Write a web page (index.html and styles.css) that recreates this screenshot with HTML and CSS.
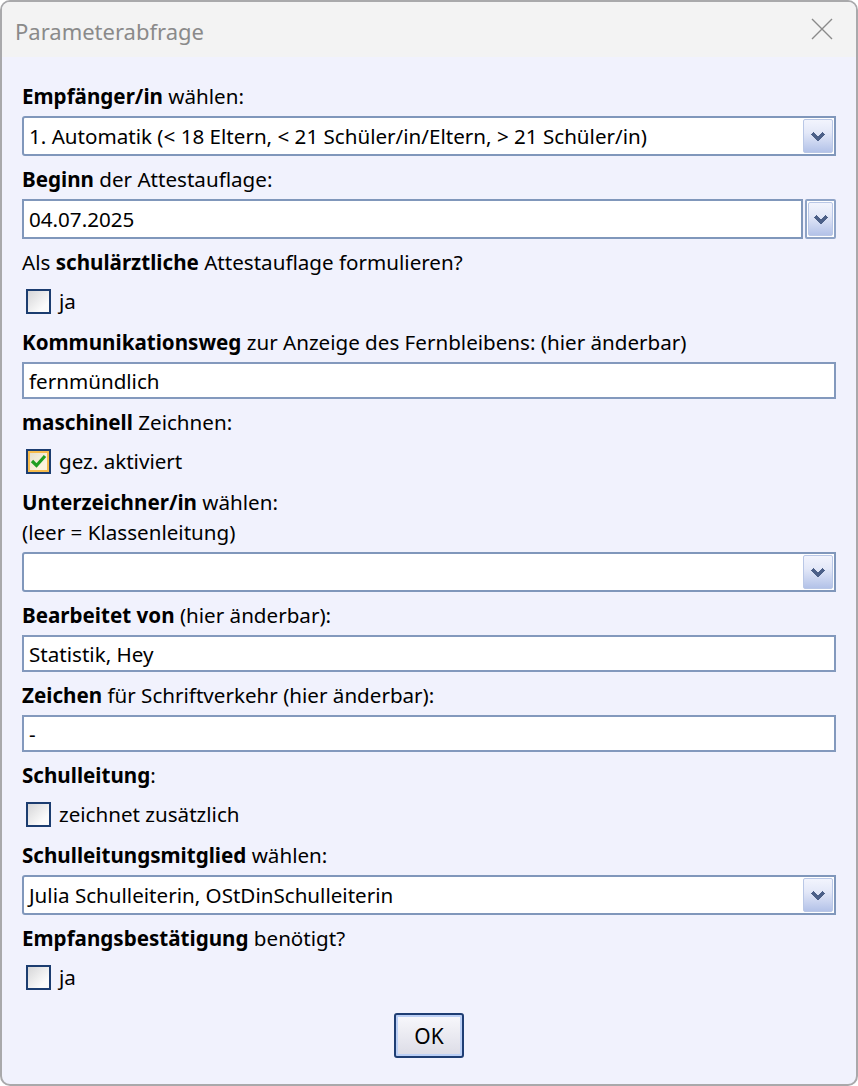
FILE: index.html
```html
<!DOCTYPE html>
<html lang="de">
<head>
<meta charset="utf-8">
<title>Parameterabfrage</title>
<link rel="stylesheet" href="styles.css">
</head>
<body>
<div class="window">
  <div class="titlebar">
    <span class="title">Parameterabfrage</span>
    <svg class="close" width="22" height="22" viewBox="0 0 22 22"><path d="M1 1 L21 21 M21 1 L1 21" stroke="#8a8a8a" stroke-width="1.4" fill="none"/></svg>
  </div>
  <div class="content">
    <div class="label first"><b>Empfänger/in</b> wählen:</div>
    <div class="combo field">
      <span class="value">1. Automatik (&lt; 18 Eltern, &lt; 21 Schüler/in/Eltern, &gt; 21 Schüler/in)</span>
      <span class="dd"><svg width="14" height="9" viewBox="0 0 14 9" shape-rendering="crispEdges"><polyline points="1.5,1.5 7,7 12.5,1.5" fill="none" stroke="#4c6088" stroke-width="3.2"/></svg></span>
    </div>

    <div class="label"><b>Beginn</b> der Attestauflage:</div>
    <div class="datecombo field">
      <span class="datefield">04.07.2025</span>
      <span class="datebtn"><span class="dd"><svg width="14" height="9" viewBox="0 0 14 9" shape-rendering="crispEdges"><polyline points="1.5,1.5 7,7 12.5,1.5" fill="none" stroke="#4c6088" stroke-width="3.2"/></svg></span></span>
    </div>

    <div class="label">Als <b>schulärztliche</b> Attestauflage formulieren?</div>
    <div class="check"><span class="box"></span><span>ja</span></div>

    <div class="label after-check"><b>Kommunikationsweg</b> zur Anzeige des Fernbleibens: (hier änderbar)</div>
    <div class="input field">fernmündlich</div>

    <div class="label"><b>maschinell</b> Zeichnen:</div>
    <div class="check"><span class="box checked"><svg width="17" height="15" viewBox="0 0 17 15"><polyline points="2,7 6.5,11.5 15,2" fill="none" stroke="#1e9e22" stroke-width="3.2"/></svg></span><span>gez. aktiviert</span></div>

    <div class="label after-check"><b>Unterzeichner/in</b> wählen:<br>(leer = Klassenleitung)</div>
    <div class="combo field">
      <span class="value"></span>
      <span class="dd"><svg width="14" height="9" viewBox="0 0 14 9" shape-rendering="crispEdges"><polyline points="1.5,1.5 7,7 12.5,1.5" fill="none" stroke="#4c6088" stroke-width="3.2"/></svg></span>
    </div>

    <div class="label"><b>Bearbeitet von</b> (hier änderbar):</div>
    <div class="input field">Statistik, Hey</div>

    <div class="label"><b>Zeichen</b> für Schriftverkehr (hier änderbar):</div>
    <div class="input field">-</div>

    <div class="label"><b>Schulleitung</b>:</div>
    <div class="check"><span class="box"></span><span>zeichnet zusätzlich</span></div>

    <div class="label after-check"><b>Schulleitungsmitglied</b> wählen:</div>
    <div class="combo field">
      <span class="value">Julia Schulleiterin, OStDinSchulleiterin</span>
      <span class="dd"><svg width="14" height="9" viewBox="0 0 14 9" shape-rendering="crispEdges"><polyline points="1.5,1.5 7,7 12.5,1.5" fill="none" stroke="#4c6088" stroke-width="3.2"/></svg></span>
    </div>

    <div class="label"><b>Empfangsbestätigung</b> benötigt?</div>
    <div class="check"><span class="box"></span><span>ja</span></div>

    <div class="buttons"><button class="ok">OK</button></div>
  </div>
</div>
</body>
</html>
```

FILE: styles.css
```css
html, body {
  margin: 0;
  padding: 0;
  background: #ffffff;
}

body {
  font-family: "Noto Sans", "Open Sans", sans-serif;
  font-size: 20.6px;
  color: #000;
}

.window {
  width: 858px;
  height: 1086px;
  box-sizing: border-box;
  border: 2px solid #a9a9ab;
  border-radius: 10px;
  overflow: hidden;
  background: #f1f2fd;
  display: flex;
  flex-direction: column;
}

.titlebar {
  height: 55px;
  flex: none;
  background: #f3f3f3;
  display: flex;
  align-items: center;
  justify-content: space-between;
  padding: 0 23px 0 13px;
}

.title {
  font-size: 22px;
  color: #8a8a8a;
  padding-top: 2px;
}

.close {
  margin-top: -2px;
}

.content {
  display: flex;
  flex-direction: column;
  padding: 24px 20px 0 20px;
}

.label {
  line-height: 30px;
  margin-top: 8px;
  white-space: nowrap;
}

.label.first {
  margin-top: 0;
}

.label.after-check {
  margin-top: 11px;
}

b {
  font-weight: 700;
}

.field {
  margin-top: 5px;
}

.combo {
  height: 40px;
  box-sizing: border-box;
  border: 2px solid #8097bb;
  border-top-left-radius: 3px;
  border-bottom-left-radius: 3px;
  background: #fff;
  display: flex;
  align-items: stretch;
  padding: 1px;
}

.combo .value {
  flex: 1;
  display: flex;
  align-items: center;
  padding-left: 4px;
  white-space: nowrap;
}

.dd {
  width: 30px;
  box-sizing: border-box;
  border: 1px solid #b9c7e6;
  border-radius: 2px;
  background: linear-gradient(#f2f4fd, #e3e8f8 40%, #b3c2e8);
  display: flex;
  align-items: center;
  justify-content: center;
}

.datecombo {
  height: 40px;
  display: flex;
  gap: 2px;
}

.datefield {
  flex: 1;
  box-sizing: border-box;
  border: 2px solid #8097bb;
  background: #fff;
  display: flex;
  align-items: center;
  padding-left: 5px;
}

.datebtn {
  width: 31px;
  box-sizing: border-box;
  border: 2px solid #8ea3c6;
  border-radius: 2px;
  background: #fff;
  padding: 1px;
  display: flex;
}

.datebtn .dd {
  flex: 1;
}

.input {
  height: 37px;
  box-sizing: border-box;
  border: 2px solid #8399bd;
  background: #fff;
  display: flex;
  align-items: center;
  padding-left: 5px;
}

.check {
  margin-top: 9px;
  height: 30px;
  display: flex;
  align-items: center;
  gap: 8px;
  padding-left: 4px;
}

.box {
  width: 25px;
  height: 25px;
  box-sizing: border-box;
  border: 2px solid #1c3d70;
  background: linear-gradient(135deg, #d6d6d8, #fbfbfb 75%);
  display: flex;
  align-items: center;
  justify-content: center;
}

.box.checked {
  border-color: #1c3d70;
  box-shadow: inset 0 0 0 2px #f6bb4c;
  background: linear-gradient(135deg, #e2dccb, #fcf4de 70%);
}

.buttons {
  display: flex;
  justify-content: center;
  margin-top: 21px;
}

.ok {
  width: 70px;
  height: 45px;
  box-sizing: border-box;
  border: 2px solid #1f3e74;
  border-radius: 3px;
  box-shadow: inset 0 0 0 2px #bcd0f6;
  background: linear-gradient(#f8f8fc, #dcdce6);
  font-family: "Noto Sans", "Open Sans", sans-serif;
  font-size: 21px;
  color: #000;
  padding: 0;
}
```
